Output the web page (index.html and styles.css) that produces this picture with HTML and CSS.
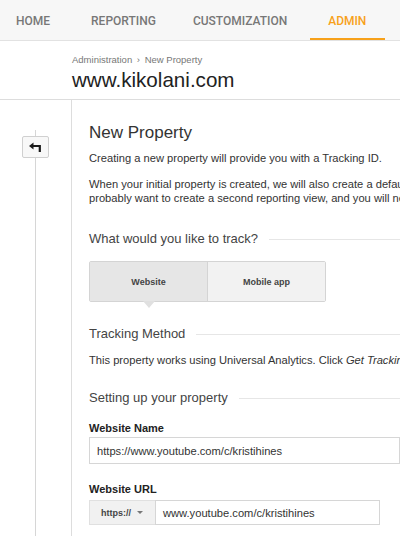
FILE: index.html
```html
<!DOCTYPE html>
<html lang="en">
<head>
  <meta charset="UTF-8" />
  <title>Admin - New Property</title>
  <link rel="stylesheet" href="styles.css">
</head>
<body>
  <nav class="topnav">
    <a class="tab t-home">HOME</a>
    <a class="tab t-rep">REPORTING</a>
    <a class="tab t-cust">CUSTOMIZATION</a>
    <a class="tab t-admin active">ADMIN</a>
  </nav>

  <header class="page-head">
    <div class="crumbs">Administration <span class="sep">›</span> New Property</div>
    <div class="site">www.kikolani.com</div>
  </header>

  <main class="layout">
    <aside class="rail">
      <span class="rail-line"></span>
      <button class="back" title="Back">
        <svg width="13" height="10" viewBox="0 0 13 10">
          <path d="M4.5 0.5 L0 4 L4.5 7.5 Z" fill="#1a1a1a" />
          <path d="M3.5 4 H10.8 V10" fill="none" stroke="#1a1a1a" stroke-width="2.2" />
        </svg>
      </button>
      <span class="rail-line grow"></span>
    </aside>

    <section class="content">
      <h1>New Property</h1>
      <p class="p-first">Creating a new property will provide you with a Tracking ID.</p>
      <p class="p-second">When your initial property is created, we will also create a default view that collects all data for this property. You will<br>probably want to create a second reporting view, and you will need to set up filters for it.</p>

      <h3 class="sect s-track">What would you like to track?</h3>
      <div class="toggle">
        <button class="opt selected">Website</button>
        <button class="opt">Mobile app</button>
      </div>

      <h3 class="sect s-method">Tracking Method</h3>
      <p class="p-method">This property works using Universal Analytics. Click <i>Get Tracking ID</i> and implement the Universal Analytics tracking code snippet to complete your set up.</p>

      <h3 class="sect s-setup">Setting up your property</h3>

      <label class="lbl l-name">Website Name</label>
      <div class="field name-field">https://www.youtube.com/c/kristihines</div>

      <label class="lbl l-url">Website URL</label>
      <div class="url-row">
        <div class="proto">https:// <span class="drop"></span></div>
        <div class="field url-field">www.youtube.com/c/kristihines</div>
      </div>
    </section>
  </main>
</body>
</html>
```

FILE: styles.css
```css
body {
  margin: 0;
  font-family: 'Liberation Sans', Arial, sans-serif;
  color: #333;
  background: #fff;
  overflow: hidden;
}

.topnav {
  display: flex;
  height: 40px;
  background: #f7f7f7;
  border-bottom: 1px solid #e2e2e2;
}

.tab {
  font-family: Roboto, 'Liberation Sans', sans-serif;
  font-weight: 500;
  font-size: 12px;
  color: #777;
  line-height: 37px;
  padding: 3px 19px 0;
  box-sizing: border-box;
  height: 40px;
}

.t-home { padding-left: 16px; padding-right: 23px; }
.t-rep { padding-left: 18px; padding-right: 18px; }
.t-cust { padding-left: 19px; padding-right: 23px; }
.t-admin { padding-left: 18px; padding-right: 19px; }
.tab.active { color: #f7a11a; border-bottom: 2px solid #f7a11a; }

.page-head {
  height: 59px;
  padding: 13px 0 0 72px;
  box-sizing: border-box;
  border-bottom: 1px solid #ddd;
}

.crumbs { font-size: 9.5px; line-height: 12px; color: #777; }
.crumbs .sep { margin: 0 2px; }
.site { font-size: 20.6px; line-height: 26px; color: #222; margin-top: 1px; }

.layout {
  display: flex;
  height: 436px;
  overflow: hidden;
}

.rail {
  width: 71px;
  flex: none;
  border-right: 1px solid #ddd;
  display: flex;
  flex-direction: column;
  align-items: center;
  padding-top: 30px;
}

.rail-line { width: 1px; height: 6px; background: #d6d6d6; }
.rail-line.grow { flex: 1; }

.back {
  width: 27px;
  height: 22px;
  padding: 0;
  border: 1px solid #d0d0d0;
  border-radius: 2px;
  background: #f8f8f8;
  display: flex;
  align-items: center;
  justify-content: center;
}

.content {
  width: 700px;
  flex: none;
  padding-left: 17px;
}

h1 {
  font-size: 17px;
  line-height: 20px;
  font-weight: normal;
  color: #333;
  margin: 23px 0 0;
}

p {
  font-size: 11.15px;
  line-height: 14px;
  margin: 0;
  color: #333;
}

.p-first { margin-top: 8px; }
.p-second { margin-top: 12px; }
.p-method { margin-top: 11px; white-space: nowrap; }

.sect {
  display: flex;
  align-items: center;
  font-size: 13px;
  line-height: 16px;
  font-weight: normal;
  color: #444;
  margin: 0;
}

.sect::after {
  content: '';
  flex: 1;
  height: 1px;
  background: #e6e6e6;
  margin-left: 11px;
}

.s-track { margin-top: 26px; }
.s-method { margin-top: 24px; }
.s-setup { margin-top: 23px; }

.toggle {
  display: flex;
  margin-top: 14px;
  width: 237px;
  height: 41px;
  border: 1px solid #d4d4d4;
  border-radius: 2px;
  box-sizing: border-box;
}

.opt {
  flex: 1;
  border: none;
  border-radius: 0;
  font-family: 'Liberation Sans', Arial, sans-serif;
  font-weight: bold;
  font-size: 9px;
  color: #444;
  background: #f2f2f2;
  padding: 0;
  position: relative;
}

.opt.selected {
  background: #e6e6e6;
  border-right: 1px solid #d4d4d4;
}

.opt.selected::after {
  content: '';
  position: absolute;
  left: 50%;
  top: 39px;
  margin-left: -6px;
  border-left: 6px solid transparent;
  border-right: 6px solid transparent;
  border-top: 7px solid #e0e0e0;
}

.lbl {
  display: block;
  font-size: 11px;
  line-height: 14px;
  font-weight: bold;
  color: #222;
}

.l-name { margin-top: 15px; }
.l-url { margin-top: 18px; }

.field {
  box-sizing: border-box;
  border: 1px solid #d6d6d6;
  font-size: 11.15px;
  color: #333;
  padding-left: 7px;
  display: flex;
  align-items: center;
}

.name-field {
  width: 311px;
  height: 27px;
  margin-top: 2px;
}

.url-row {
  display: flex;
  width: 291px;
  height: 25px;
  margin-top: 4px;
}

.proto {
  width: 66px;
  flex: none;
  box-sizing: border-box;
  background: #f1f1f1;
  border: 1px solid #e0e0e0;
  border-right: none;
  font-size: 9px;
  font-weight: bold;
  color: #444;
  display: flex;
  align-items: center;
  padding-left: 11px;
  gap: 6px;
}

.drop {
  border-left: 3px solid transparent;
  border-right: 3px solid transparent;
  border-top: 3px solid #777;
}

.url-field {
  flex: 1;
  height: 25px;
}
```
